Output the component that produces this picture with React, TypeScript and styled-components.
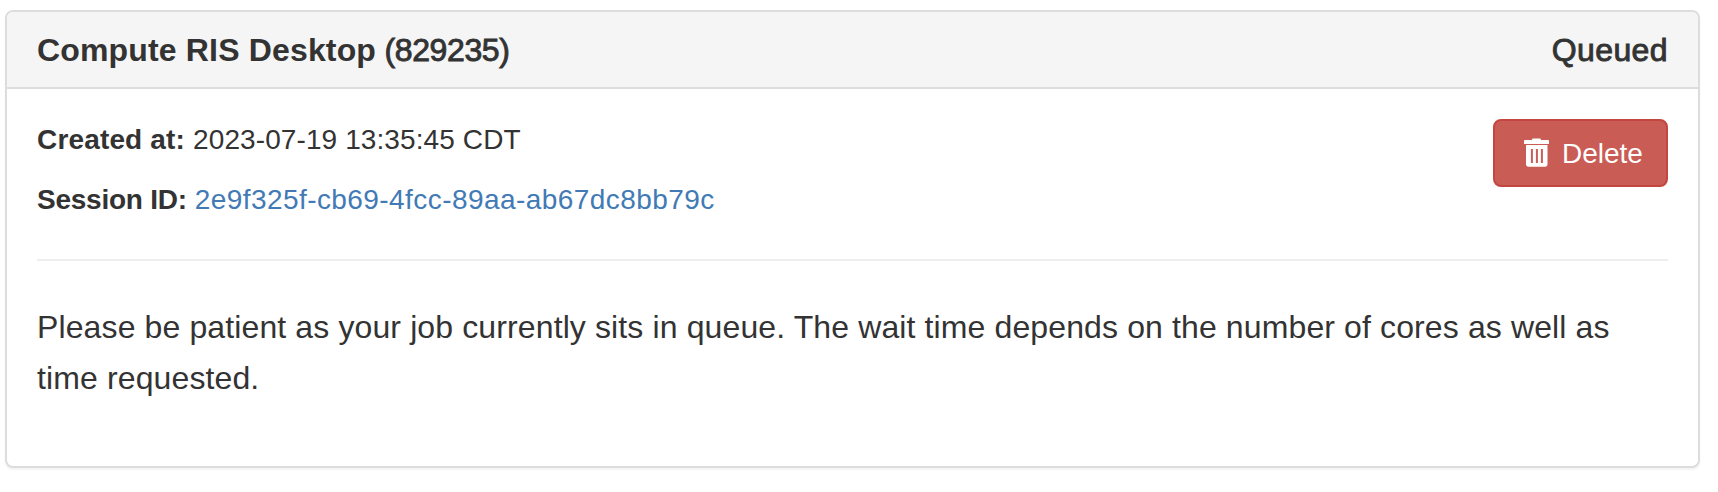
import React from "react";
import styled, { createGlobalStyle } from "styled-components";

const GlobalStyle = createGlobalStyle`
  *, *::before, *::after { box-sizing: border-box; }
  body {
    margin: 0;
    background: #fff;
    color: #333;
    font-family: "Liberation Sans", Arial, sans-serif;
    font-size: 28px;
    line-height: 40px;
  }
`;

const Page = styled.main`
  padding: 10px 18px 24px 5px;
`;

const Panel = styled.section`
  height: 458px;
  background: #fff;
  border: 2px solid #ddd;
  border-radius: 8px;
  box-shadow: 0 2px 2px rgba(0, 0, 0, 0.05);
`;

const PanelHeading = styled.header`
  display: flex;
  justify-content: space-between;
  align-items: center;
  height: 77px;
  padding: 2px 30px 0;
  background: #f5f5f5;
  border-bottom: 2px solid #ddd;
  border-radius: 6px 6px 0 0;
`;

const Heading = styled.h5`
  display: flex;
  margin: 0;
  font-size: 32px;
  font-weight: 400;
  line-height: 35px;
  white-space: pre;
`;

const AppName = styled.strong`
  font-weight: 700;
  letter-spacing: 0.16px;
`;

const Medium = styled.span<{ $tracking: number }>`
  letter-spacing: ${(p) => p.$tracking}px;
  -webkit-text-stroke: 0.9px #333;
`;

const PanelBody = styled.div`
  padding: 30px;
`;

const Summary = styled.div`
  display: flex;
  justify-content: space-between;
  align-items: flex-start;
  height: 140px;
`;

const Fields = styled.div`
  padding-top: 1px;
`;

const Field = styled.p`
  display: flex;
  gap: 8px;
  margin: 0 0 20px;
  white-space: nowrap;
`;

const Label = styled.strong<{ $tracking: number }>`
  font-weight: 700;
  letter-spacing: ${(p) => p.$tracking}px;
`;

const Value = styled.span`
  letter-spacing: 0.1px;
`;

const SessionLink = styled.a`
  color: #427ab5;
  letter-spacing: 0.43px;
  text-decoration: none;
`;

const DeleteButton = styled.button`
  display: flex;
  align-items: center;
  gap: 13px;
  width: 175px;
  height: 68px;
  padding: 0 0 0 29px;
  color: #fff;
  background: #c95c54;
  border: 2px solid #c34740;
  border-radius: 8px;
  font: inherit;
`;

const ButtonLabel = styled.span`
  padding-top: 2px;
`;

const Divider = styled.hr`
  margin: 0;
  border: 0;
  border-top: 2px solid #eee;
`;

const Message = styled.p`
  margin: 41px 0 0;
  font-size: 32px;
  line-height: 51px;
  letter-spacing: 0.12px;
`;

const TrashIcon = () => (
  <svg width="25" height="30" viewBox="0 0 25 30" fill="#fff" aria-hidden="true">
    <path d="M8 2V1.6Q8 .5 9.1 .5H15.9Q17 .5 17 1.6V2H24Q25 2 25 3V6H0V3Q0 2 1 2Z" />
    <path
      fillRule="evenodd"
      d="M2 7H23.5V26Q23.5 28.7 21 28.7H4.5Q2 28.7 2 26ZM6.9 11V25H8.9V11ZM11.9 11V25H13.9V11ZM16.9 11V25H18.9V11Z"
    />
  </svg>
);

export default function App() {
  return (
    <>
      <GlobalStyle />
      <Page>
        <Panel>
          <PanelHeading>
            <Heading>
              <AppName>Compute RIS Desktop</AppName>
              <Medium $tracking={-0.4}> (829235)</Medium>
            </Heading>
            <Heading>
              <Medium $tracking={0.4}>Queued</Medium>
            </Heading>
          </PanelHeading>
          <PanelBody>
            <Summary>
              <Fields>
                <Field>
                  <Label $tracking={0.16}>Created at:</Label>
                  <Value>2023-07-19 13:35:45 CDT</Value>
                </Field>
                <Field>
                  <Label $tracking={-0.25}>Session ID:</Label>
                  <SessionLink href="#">2e9f325f-cb69-4fcc-89aa-ab67dc8bb79c</SessionLink>
                </Field>
              </Fields>
              <DeleteButton type="button">
                <TrashIcon />
                <ButtonLabel>Delete</ButtonLabel>
              </DeleteButton>
            </Summary>
            <Divider />
            <Message>
              Please be patient as your job currently sits in queue. The wait time depends on the
              number of cores as well as time requested.
            </Message>
          </PanelBody>
        </Panel>
      </Page>
    </>
  );
}
